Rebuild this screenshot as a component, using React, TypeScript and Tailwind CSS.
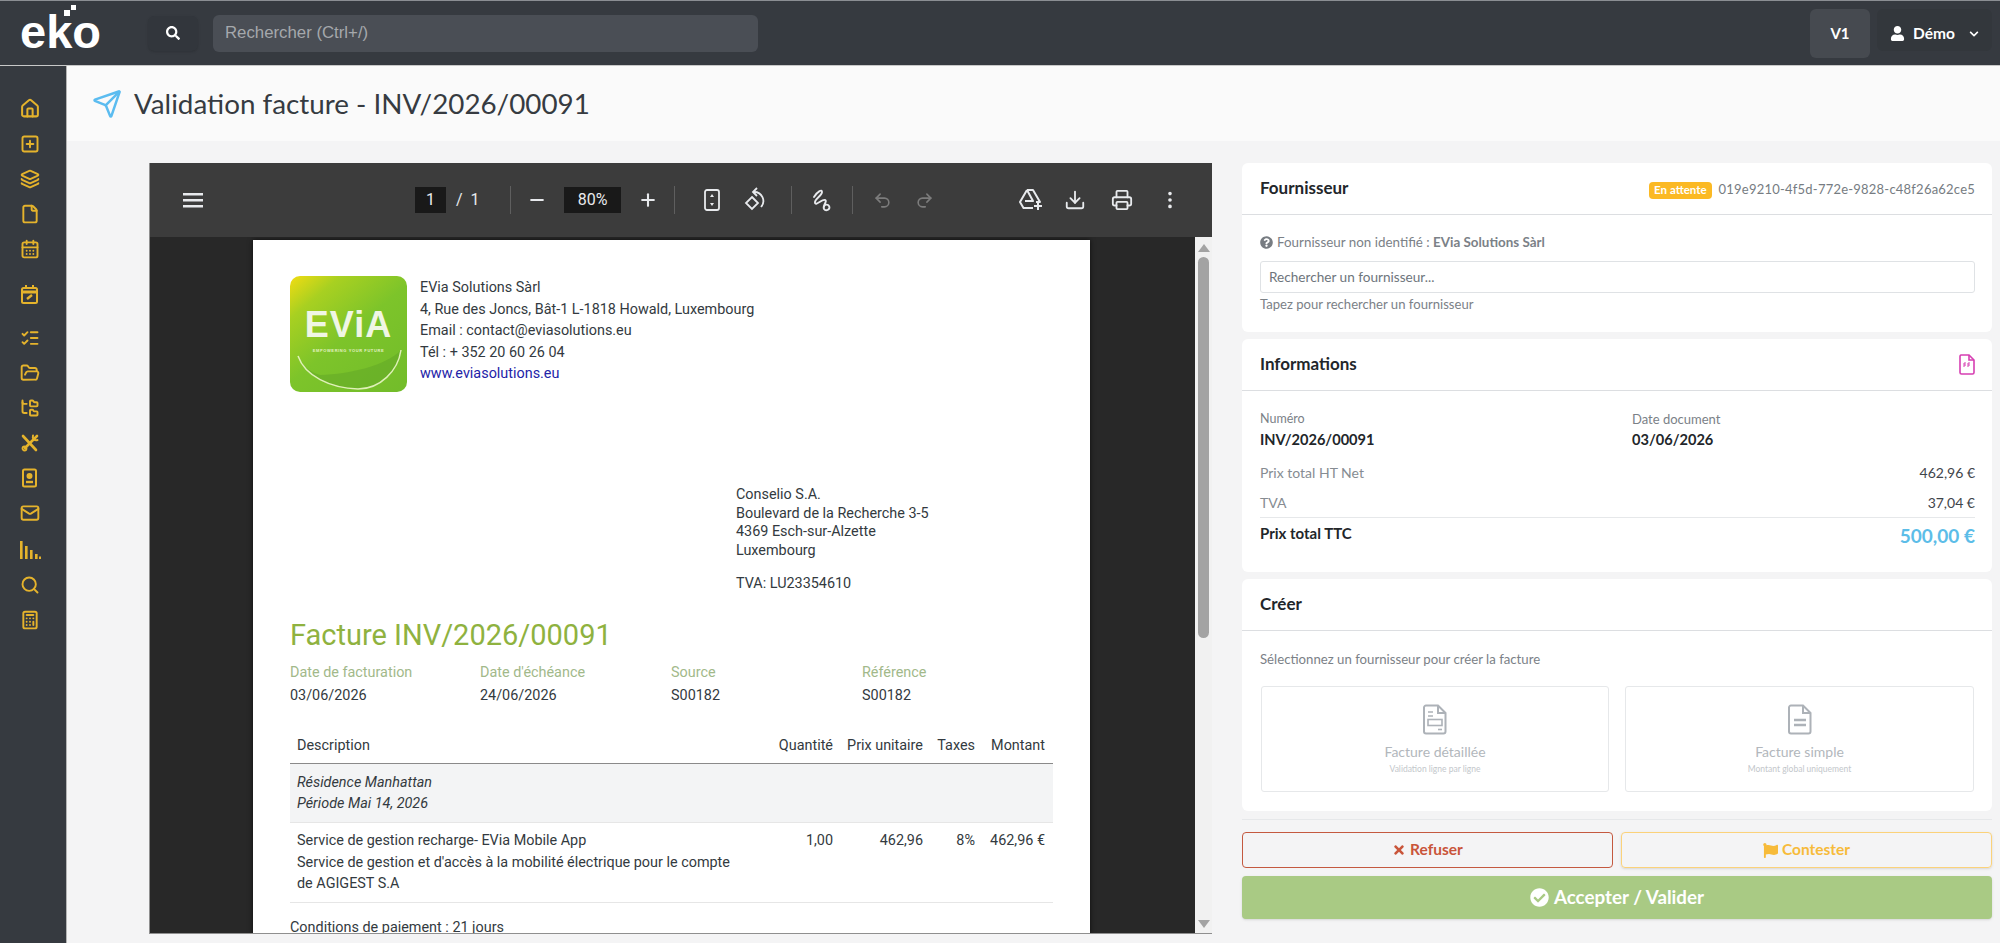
import { Send, Minus, Plus, Undo2, Redo2, Download, Printer, EllipsisVertical, FolderTree, SquarePlus, Layers, File, CalendarDays, ListChecks, FolderOpen, Mail, Search, Calculator, House } from "lucide-react";
import { FaSearch, FaUser, FaChevronDown, FaQuestionCircle, FaTimes, FaFlag, FaCheckCircle } from "react-icons/fa";

const ui = "font-['Lato','Noto_Sans',sans-serif]";
const pdf = "font-['Roboto',sans-serif]";

//sidebar icons drawn by hand where the packages have no match
function CalendarEdit() {
  return (
    <svg width="19" height="20" viewBox="0 0 19 20" fill="none" stroke="currentColor" strokeWidth="2">
      <rect x="2" y="4" width="15" height="15" rx="1.5" />
      <path d="M2 8h15" strokeWidth="3" />
      <path d="M6 1v4M13 1v4" />
      <path d="M7 15l5-4" strokeWidth="2.4" />
    </svg>
  );
}

function Contact() {
  return (
    <svg width="17" height="20" viewBox="0 0 17 20" fill="none" stroke="currentColor" strokeWidth="2">
      <rect x="2" y="1.5" width="13" height="17" rx="1.5" />
      <circle cx="8.5" cy="8" r="2" fill="currentColor" />
      <path d="M5 14h7" strokeWidth="2.4" />
    </svg>
  );
}

function Bars() {
  return (
    <svg width="22" height="20" viewBox="0 0 22 20" fill="currentColor">
      <rect x="1" y="1" width="2.6" height="18" />
      <rect x="6" y="6" width="2.6" height="13" />
      <rect x="11" y="10" width="2.6" height="9" />
      <rect x="16" y="14" width="2.6" height="5" />
      <rect x="20" y="16.5" width="2" height="2.5" />
    </svg>
  );
}

function Tools() {
  return (
    <svg width="20" height="20" viewBox="0 0 20 20" fill="none" stroke="currentColor" strokeWidth="2.6" strokeLinecap="round">
      <path d="M3 3l13 14" />
      <path d="M17 3L5 15" />
      <circle cx="4.5" cy="15.5" r="2" strokeWidth="1.8" />
      <path d="M13 2.5a3.5 3.5 0 0 0 4.5 4.5" strokeWidth="2" />
    </svg>
  );
}

const menuIcon = "w-[20px] h-[20px] stroke-[2.3]";

const menu = [
  { icon: <House className="w-[22px] h-[21px] stroke-[2.3]" />, cls: "" },
  { icon: <SquarePlus className={menuIcon} />, cls: "" },
  { icon: <Layers className={menuIcon} />, cls: "" },
  { icon: <File className={menuIcon} />, cls: "" },
  { icon: <CalendarDays className={menuIcon} />, cls: "" },
  { icon: <CalendarEdit />, cls: "mt-[10px]" },
  { icon: <ListChecks className={menuIcon} />, cls: "mt-[9px]" },
  { icon: <FolderOpen className={menuIcon} />, cls: "" },
  { icon: <FolderTree className={menuIcon} />, cls: "" },
  { icon: <Tools />, cls: "" },
  { icon: <Contact />, cls: "" },
  { icon: <Mail className={menuIcon} />, cls: "" },
  { icon: <Bars />, cls: "mt-[2px]" },
  { icon: <Search className={menuIcon} />, cls: "" },
  { icon: <Calculator className={menuIcon} />, cls: "" },
];

function Header() {
  return (
    <div className="h-[66px] shrink-0 bg-[#363a40] flex items-center pl-[20px] pr-[8px] border-t border-t-[#8b8e93] border-b border-b-[#c8c8c8]">
      <div className="relative w-[128px] text-white text-[47px] leading-none font-bold tracking-[0px] font-['Liberation_Sans',sans-serif] -mt-[3px]">
        eko
        <span className="absolute left-[44px] top-[2px] w-[6px] h-[6px] bg-white"></span>
        <span className="absolute left-[51px] top-[-3px] w-[5px] h-[5px] bg-white"></span>
      </div>
      <button className="w-[50px] h-[35px] bg-[#32363c] rounded-md shadow-sm flex items-center justify-center text-white">
        <FaSearch className="text-[14px]" />
      </button>
      <div className="ml-[15px] w-[545px] h-[37px] bg-[#4a4e55] rounded-md flex items-center pl-[12px] text-[16.8px] text-[#a5a8ac] font-['Liberation_Sans',sans-serif]">
        Rechercher (Ctrl+/)
      </div>
      <div className="flex-1"></div>
      <div className={`w-[60px] h-[49px] bg-[#464a50] rounded-md flex items-center justify-center text-white text-[15px] font-bold ${ui}`}>
        V1
      </div>
      <div className={`ml-[7px] w-[115px] h-[42px] -mt-[7px] pt-[8px] bg-[#33373c] rounded-md flex items-center pl-[13px] text-white text-[15.5px] font-bold ${ui}`}>
        <FaUser className="text-[15px]" />
        <span className="ml-[8px]">Démo</span>
        <FaChevronDown className="ml-[14px] text-[10px]" />
      </div>
    </div>
  );
}

function Sep() {
  return <div className="w-px h-[28px] bg-[#5f5f5f]"></div>;
}

function PdfToolbar() {
  const ic = "w-[22px] h-[22px] stroke-[2]";
  return (
    <div className={`h-[74px] shrink-0 bg-[#3c3c3c] shadow-md flex items-center text-[#e8eaed] text-[16px] ${pdf}`}>
      <svg className="ml-[33px]" width="20" height="24" viewBox="0 0 20 24" fill="currentColor">
        <rect x="0" y="5" width="20" height="2.5" />
        <rect x="0" y="11" width="20" height="2.5" />
        <rect x="0" y="17" width="20" height="2.5" />
      </svg>
      <div className="ml-[212px] w-[31px] h-[26px] bg-[#191919] flex items-center justify-center">1</div>
      <span className="ml-[10px] w-[54px]">/&nbsp;&nbsp;1</span>
      <Sep />
      <Minus className="ml-[16px] w-[20px] h-[20px] stroke-[2.5]" />
      <div className="ml-[17px] w-[57px] h-[26px] bg-[#191919] flex items-center justify-center">80%</div>
      <Plus className="ml-[17px] w-[20px] h-[20px] stroke-[2.5]" />
      <div className="ml-[16px]"><Sep /></div>
      <svg className="ml-[27px]" width="20" height="24" viewBox="0 0 20 24" fill="none" stroke="currentColor" strokeWidth="1.8">
        <rect x="3" y="2" width="14" height="20" rx="2" />
        <path d="M10 6l2 3H8zM10 18l2-3H8z" fill="currentColor" stroke="none" />
      </svg>
      <svg className="ml-[21px]" width="24" height="26" viewBox="0 0 24 26" fill="none" stroke="currentColor" strokeWidth="1.8">
        <path d="M9 10l6 6-6 6-6-6z" />
        <path d="M11 5a9 9 0 0 1 7 15" />
        <path d="M14 1l-4 4 4 4" />
      </svg>
      <div className="ml-[24px]"><Sep /></div>
      <svg className="ml-[19px]" width="22" height="26" viewBox="0 0 22 26" fill="none" stroke="currentColor" strokeWidth="1.9" strokeLinecap="round">
        <path d="M3 10c4-6 8-8 8-5 0 4-8 7-7 11 1 3 7-4 10-3 3 1-3 6-1 9 2 3 7 0 5-3-1-2-5-2-5 1" />
      </svg>
      <div className="ml-[19px]"><Sep /></div>
      <Undo2 className="ml-[20px] w-[19px] h-[19px] stroke-[2] text-[#7c7c7c]" />
      <Redo2 className="ml-[23px] w-[19px] h-[19px] stroke-[2] text-[#7c7c7c]" />
      <svg className="ml-[84px]" width="26" height="26" viewBox="0 0 26 26" fill="none" stroke="currentColor" strokeWidth="2" strokeLinejoin="round">
        <path d="M9 3h6l7 12h-4" />
        <path d="M9 3L2 15l3.5 6H15" />
        <path d="M9 3l6 11H7" />
        <path d="M20 15v8M16 19h8" />
      </svg>
      <Download className={`ml-[20px] ${ic}`} />
      <Printer className={`ml-[25px] ${ic}`} />
      <EllipsisVertical className={`ml-[26px] ${ic}`} />
    </div>
  );
}

function EviaLogo() {
  return (
    <div className="relative w-[117px] h-[116px] shrink-0 rounded-[10px] overflow-hidden bg-[linear-gradient(140deg,#f2dc12_0%,#a8d021_20%,#7dc42a_50%,#72bc2a_100%)] flex flex-col items-center">
      <svg className="absolute left-0 top-0" width="117" height="116" viewBox="0 0 117 116" fill="none">
        <path d="M8 80C15 100 40 112 68 113C90 113 108 95 111 74C95 90 60 98 30 99C20 96 12 90 8 80z" fill="#62a826" opacity="0.55" />
        <path d="M8 80C15 100 40 112 68 113C90 113 108 95 111 74" stroke="#dff0b8" strokeWidth="1.5" />
      </svg>
      <div className="relative mt-[31px] text-[36px] leading-[36px] font-bold text-[#f0f6e4] tracking-[1px] font-['Liberation_Sans',sans-serif]">EViA</div>
      <div className="relative mt-[5px] text-[4px] leading-[5px] font-bold text-[#e4f2c4] tracking-[0.6px] font-['Liberation_Sans',sans-serif]">EMPOWERING YOUR FUTURE</div>
    </div>
  );
}

function PdfPage() {
  return (
    <div className={`w-[837px] ml-[103px] mt-[3px] h-[694px] bg-white shadow-[0_0_5px_rgba(0,0,0,0.7)] pl-[37px] pr-[36px] pt-[36px] overflow-hidden text-[#333a40] ${pdf}`}>
      <div className="flex">
        <EviaLogo />
        <div className="ml-[13px] mt-px text-[14.4px] leading-[21.6px]">
          <div>EVia Solutions Sàrl</div>
          <div>4, Rue des Joncs, Bât-1 L-1818 Howald, Luxembourg</div>
          <div>Email : contact@eviasolutions.eu</div>
          <div>Tél : + 352 20 60 26 04</div>
          <div className="text-[#2323a8]">www.eviasolutions.eu</div>
        </div>
      </div>
      <div className="ml-[446px] mt-[94px] text-[14.4px] leading-[18.6px]">
        <div>Conselio S.A.</div>
        <div>Boulevard de la Recherche 3-5</div>
        <div>4369 Esch-sur-Alzette</div>
        <div>Luxembourg</div>
        <div className="mt-[15px]">TVA: LU23354610</div>
      </div>
      <div className="mt-[23px] text-[29px] leading-[36px] text-[#8fb23f]">Facture INV/2026/00091</div>
      <div className="mt-[10px] grid grid-cols-[190px_191px_191px_191px] text-[14.4px]">
        <div className="leading-[20px] text-[#a2b98a]">Date de facturation</div>
        <div className="leading-[20px] text-[#a2b98a]">Date d'échéance</div>
        <div className="leading-[20px] text-[#a2b98a]">Source</div>
        <div className="leading-[20px] text-[#a2b98a]">Référence</div>
        <div className="mt-[3px] leading-[20px]">03/06/2026</div>
        <div className="mt-[3px] leading-[20px]">24/06/2026</div>
        <div className="mt-[3px] leading-[20px]">S00182</div>
        <div className="mt-[3px] leading-[20px]">S00182</div>
      </div>
      <table className="mt-[22px] w-[763px] table-fixed text-[14.4px] leading-[21.5px]">
        <colgroup>
          <col className="w-[480px]" />
          <col className="w-[71px]" />
          <col className="w-[90px]" />
          <col className="w-[52px]" />
          <col className="w-[70px]" />
        </colgroup>
        <thead>
          <tr className="h-[36px] border-b border-[#8a8a8a]">
            <th className="px-[7px] font-normal text-left">Description</th>
            <th className="pr-[8px] font-normal text-right">Quantité</th>
            <th className="pr-[8px] font-normal text-right">Prix unitaire</th>
            <th className="pr-[8px] font-normal text-right">Taxes</th>
            <th className="pr-[8px] font-normal text-right">Montant</th>
          </tr>
        </thead>
        <tbody>
          <tr className="h-[59px] bg-[#f3f4f5] border-b border-[#e6e6e6] italic">
            <td colSpan={5} className="px-[7px]">
              Résidence Manhattan<br />Période Mai 14, 2026
            </td>
          </tr>
          <tr className="h-[80px] border-b border-[#e6e6e6] align-top">
            <td className="px-[7px] pt-[7px] whitespace-nowrap">
              Service de gestion recharge- EVia Mobile App<br />
              Service de gestion et d'accès à la mobilité électrique pour le compte<br />
              de AGIGEST S.A
            </td>
            <td className="pr-[8px] pt-[7px] text-right">1,00</td>
            <td className="pr-[8px] pt-[7px] text-right">462,96</td>
            <td className="pr-[8px] pt-[7px] text-right">8%</td>
            <td className="pr-[8px] pt-[7px] text-right whitespace-nowrap">462,96 €</td>
          </tr>
        </tbody>
      </table>
      <div className="mt-[15px] text-[14.4px] leading-[20px]">Conditions de paiement : 21 jours</div>
    </div>
  );
}

function PdfViewer() {
  return (
    <div className="w-[1063px] h-[771px] flex flex-col overflow-hidden border-l border-b border-[#8f8f8f]">
      <PdfToolbar />
      <div className="flex-1 flex bg-[#282828] overflow-hidden">
        <div className="flex-1">
          <PdfPage />
        </div>
        <div className="w-[17px] bg-[#f1f1f1] flex flex-col items-center pt-[7px]">
          <div className="w-0 h-0 border-l-[6px] border-r-[6px] border-b-[8px] border-l-transparent border-r-transparent border-b-[#a3a3a3]"></div>
          <div className="mt-[5px] w-[11px] h-[381px] rounded-full bg-[#a3a3a3]"></div>
          <div className="flex-1"></div>
          <div className="mb-[5px] w-0 h-0 border-l-[6px] border-r-[6px] border-t-[8px] border-l-transparent border-r-transparent border-t-[#a3a3a3]"></div>
        </div>
      </div>
    </div>
  );
}

function CardHead({ title, children }: { title: string; children?: React.ReactNode }) {
  return (
    <div className="h-[52px] border-b border-[#dcdee1] flex items-center justify-between pl-[18px] pr-[17px]">
      <div className="-mt-[2px] text-[17px] font-bold text-[#22262a]">{title}</div>
      {children}
    </div>
  );
}

function Fournisseur() {
  return (
    <div className="h-[169px] bg-white rounded-md shrink-0">
      <CardHead title="Fournisseur">
        <div className="flex items-center mt-[3px]">
          <span className="h-[17px] px-[5px] rounded bg-[#fbb924] text-white text-[11.5px] font-bold flex items-center">En attente</span>
          <span className="ml-[7px] text-[13px] tracking-[0.22px] text-[#767c82]">019e9210-4f5d-772e-9828-c48f26a62ce5</span>
        </div>
      </CardHead>
      <div className="pl-[18px] pr-[17px]">
        <div className="mt-[19px] h-[16px] flex items-center text-[13.4px] text-[#7b8187]">
          <FaQuestionCircle className="text-[13px] text-[#777c82]" />
          <span className="ml-[4px]">Fournisseur non identifié : <b className="font-bold">EVia Solutions Sàrl</b></span>
        </div>
        <div className="mt-[11px] h-[32px] border border-[#dfe2e5] rounded-[3px] flex items-center pl-[8px] text-[13.6px] text-[#6e757c]">
          Rechercher un fournisseur...
        </div>
        <div className="mt-[3px] text-[13.1px] leading-[16px] text-[#7b8187]">Tapez pour rechercher un fournisseur</div>
      </div>
    </div>
  );
}

function Informations() {
  return (
    <div className="h-[233px] mt-[7px] bg-white rounded-md shrink-0">
      <CardHead title="Informations">
        <svg width="16" height="21" viewBox="0 0 16 21" fill="none" stroke="#d63fb2" strokeWidth="1.6">
          <path d="M2 1h8l5 5v12.5a1.5 1.5 0 0 1-1.5 1.5h-11A1.5 1.5 0 0 1 1 18.5V2.5A1.5 1.5 0 0 1 2 1z" />
          <path d="M10 1v5h5" />
          <path d="M5 9v4M5 9h2M5 11h2M9 9v4M9 9h2M9 11h2" strokeWidth="1" />
        </svg>
      </CardHead>
      <div className="pl-[18px] pr-[17px]">
        <div className="mt-[20px] grid grid-cols-[372px_1fr]">
          <div className="text-[12.5px] leading-[16px] text-[#7b8187]">Numéro</div>
          <div className="text-[13px] leading-[16px] text-[#7b8187]">Date document</div>
          <div className="mt-[4px] text-[14.6px] leading-[18px] font-bold text-[#22262a]">INV/2026/00091</div>
          <div className="mt-[4px] text-[14.6px] leading-[18px] font-bold text-[#22262a]">03/06/2026</div>
        </div>
        <div className="mt-[13px] h-[20px] flex justify-between items-center text-[14px] text-[#3f454b]">
          <span className="text-[#868c92]">Prix total HT Net</span>
          <span>462,96 €</span>
        </div>
        <div className="mt-[10px] h-[20px] flex justify-between items-center text-[14px] text-[#3f454b]">
          <span className="text-[#868c92]">TVA</span>
          <span>37,04 €</span>
        </div>
        <div className="mt-[5px] border-t border-[#e6e8ea] pt-[5px] flex justify-between">
          <span className="text-[15px] leading-[20px] font-bold text-[#22262a]">Prix total TTC</span>
          <span className="text-[19px] leading-[26px] font-bold text-[#5cbde8]">500,00 €</span>
        </div>
      </div>
    </div>
  );
}

function ChoiceCard({ title, sub, children }: { title: string; sub: string; children: React.ReactNode }) {
  return (
    <div className="h-[106px] border border-[#e6e8ea] rounded-[3px] flex flex-col items-center pt-[17px]">
      {children}
      <div className="mt-[8px] text-[14px] leading-[18px] text-[#b2b7bc]">{title}</div>
      <div className="mt-[2px] text-[8.5px] leading-[12px] text-[#c3c7cb]">{sub}</div>
    </div>
  );
}

function Creer() {
  return (
    <div className="h-[232px] mt-[7px] bg-white rounded-md shrink-0">
      <CardHead title="Créer" />
      <div className="pl-[18px] pr-[18px]">
        <div className="mt-[19px] text-[13.2px] leading-[18px] text-[#7b8187]">Sélectionnez un fournisseur pour créer la facture</div>
        <div className="mt-[18px] grid grid-cols-[348px_349px] gap-[16px] ml-px">
          <ChoiceCard title="Facture détaillée" sub="Validation ligne par ligne">
            <svg width="24" height="31" viewBox="0 0 24 31" fill="none" stroke="#adb2b8" strokeWidth="2">
              <path d="M3 1.5h12l7.5 7.5v18.500a2 2 0 0 1-2 2H3a2 2 0 0 1-2-2v-24a2 2 0 0 1 2-2z" />
              <path d="M15 1.5V9h7.5" />
              <path d="M5 8h5M5 12h5" strokeWidth="1.6" />
              <rect x="5" y="15.5" width="14" height="6" strokeWidth="1.6" />
              <path d="M15 25.5h4" strokeWidth="1.6" />
            </svg>
          </ChoiceCard>
          <ChoiceCard title="Facture simple" sub="Montant global uniquement">
            <svg width="24" height="31" viewBox="0 0 24 31" fill="none" stroke="#adb2b8" strokeWidth="2">
              <path d="M3 1.5h12l7.5 7.5v18.500a2 2 0 0 1-2 2H3a2 2 0 0 1-2-2v-24a2 2 0 0 1 2-2z" />
              <path d="M15 1.5V9h7.5" />
              <path d="M6 16h12M6 21h12" strokeWidth="2.4" />
            </svg>
          </ChoiceCard>
        </div>
      </div>
    </div>
  );
}

function Actions() {
  return (
    <div className="mt-[8px] border-t border-[#e6e8ea] pt-[12px]">
      <div className="grid grid-cols-2 gap-[8px]">
        <button className="h-[36px] border border-[#c4593f] rounded flex items-center justify-center text-[15.5px] font-bold text-[#c9553a]">
          <FaTimes className="text-[14px]" />
          <span className="ml-[4px]">Refuser</span>
        </button>
        <button className="h-[36px] border border-[#fbd27a] rounded shadow-sm flex items-center justify-center text-[15.5px] font-bold text-[#f7bb3a]">
          <FaFlag className="text-[15px]" />
          <span className="ml-[4px]">Contester</span>
        </button>
      </div>
      <button className="mt-[8px] w-full h-[43px] bg-[#a9ca84] rounded shadow-sm flex items-center justify-center text-[18.8px] font-bold text-white">
        <FaCheckCircle className="text-[19px]" />
        <span className="ml-[5px]">Accepter / Valider</span>
      </button>
    </div>
  );
}

export default function App() {
  return (
    <div className="w-[2000px] h-[950px] overflow-hidden bg-white">
      <div className="h-[943px] flex flex-col overflow-hidden">
        <Header />
        <div className="flex-1 flex min-h-0">
          <div className="w-[67px] shrink-0 bg-[#363a40] border-r border-[#b4b4b4] text-[#e5b32c] flex flex-col items-center pt-[25px] pr-[7px]">
            {menu.map((item, i) => (
              <div key={i} className={`h-[35px] flex items-center justify-center ${item.cls}`}>
                {item.icon}
              </div>
            ))}
          </div>
          <div className="flex-1 flex flex-col min-w-0">
            <div className={`h-[75px] shrink-0 bg-[#fafafa] flex items-center pl-[25px] ${ui}`}>
              <Send className="w-[30px] h-[30px] text-[#5bbcf0] stroke-[2]" />
              <h1 className="ml-[12px] text-[27.8px] text-[#363b41] font-normal">Validation facture - INV/2026/00091</h1>
            </div>
            <div className={`flex-1 bg-[#f4f4f5] flex pt-[22px] pl-[82px] ${ui}`}>
              <PdfViewer />
              <div className="ml-[30px] w-[750px] flex flex-col">
                <Fournisseur />
                <Informations />
                <Creer />
                <Actions />
              </div>
            </div>
          </div>
        </div>
      </div>
    </div>
  );
}
